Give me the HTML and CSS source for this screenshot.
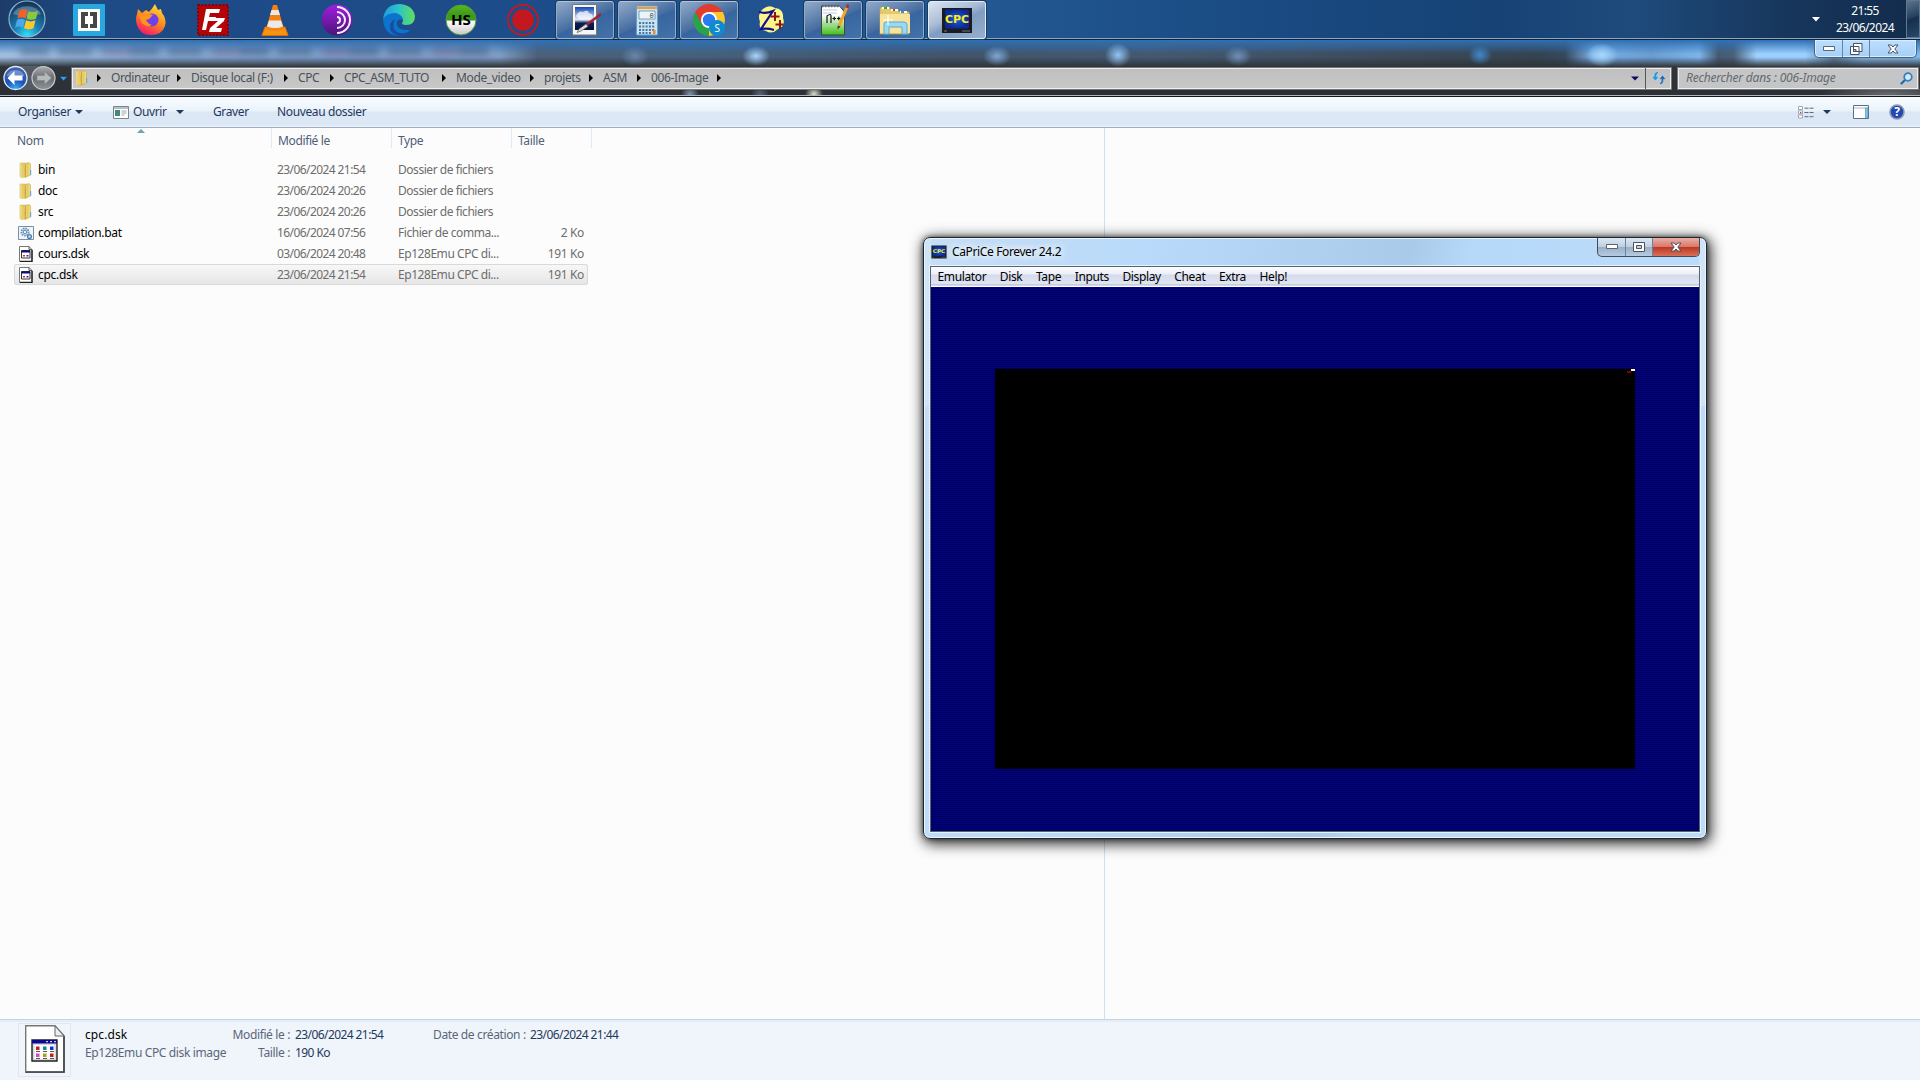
FILE: index.html
```html
<!DOCTYPE html>
<html lang="fr">
<head>
<meta charset="utf-8">
<title>006-Image</title>
<link rel="stylesheet" href="styles.css">
</head>
<body>
<svg class="defs" width="0" height="0" aria-hidden="true">
  <defs>
    <linearGradient id="gFold" x1="0" x2="1"><stop offset="0" stop-color="#f7e694"/><stop offset=".5" stop-color="#e3c862"/><stop offset="1" stop-color="#f3e08c"/></linearGradient>
    <radialGradient id="gOrb" cx=".5" cy=".95" r=".9"><stop offset="0" stop-color="#2fe0ff"/><stop offset=".4" stop-color="#1c7fb4"/><stop offset="1" stop-color="#14365a"/></radialGradient>
    <linearGradient id="gFox" x1=".8" y1="0" x2=".3" y2="1"><stop offset="0" stop-color="#ffe23d"/><stop offset=".5" stop-color="#ff8a1e"/><stop offset="1" stop-color="#f5156c"/></linearGradient>
    <linearGradient id="gTor" x1="0" x2="0" y1="0" y2="1"><stop offset="0" stop-color="#a01fe0"/><stop offset="1" stop-color="#4b1478"/></linearGradient>
    <linearGradient id="gEdge" x1="0" x2="1"><stop offset="0" stop-color="#1c9ddf"/><stop offset=".5" stop-color="#2dc3c8"/><stop offset="1" stop-color="#62e05a"/></linearGradient>
    <linearGradient id="gHs" x1="0" x2="0" y1="0" y2="1"><stop offset="0" stop-color="#58b81f"/><stop offset=".3" stop-color="#3f9c18"/><stop offset=".5" stop-color="#3f9c18"/><stop offset=".54" stop-color="#fff"/><stop offset="1" stop-color="#c8c8c8"/></linearGradient>
    <linearGradient id="gSky" x1="0" x2="0" y1="0" y2="1"><stop offset="0" stop-color="#1247b0"/><stop offset=".55" stop-color="#dfeaf8"/><stop offset=".7" stop-color="#0a1f55"/><stop offset="1" stop-color="#05113a"/></linearGradient>
    <linearGradient id="gNpp" x1="0" x2="0" y1="0" y2="1"><stop offset=".3" stop-color="#fff"/><stop offset="1" stop-color="#3fbf10"/></linearGradient>
    <radialGradient id="gNav" cx=".5" cy="1" r=".9"><stop offset="0" stop-color="#38b6ff"/><stop offset=".5" stop-color="#1c50b8"/><stop offset="1" stop-color="#3b63b0"/></radialGradient>
    <linearGradient id="gGrey" x1="0" x2="0" y1="0" y2="1"><stop offset="0" stop-color="#a9adb1"/><stop offset=".5" stop-color="#686d72"/><stop offset="1" stop-color="#90959a"/></linearGradient>
    <radialGradient id="gCpc"><stop offset="0" stop-color="#1a62d8"/><stop offset="1" stop-color="#0a2a9a"/></radialGradient>
    <symbol id="folder" viewBox="0 0 16 16"><path d="M2 1h4.500l1 1v13l-4.500.500-1-1z" fill="url(#gFold)" stroke="#d9bd58" stroke-width=".6"/><path d="M6 1.500l5-.8 1.500 1V13l-5.500 2.500z" fill="url(#gFold)" stroke="#caa63c" stroke-width=".6"/><path d="M7.500 2v13" stroke="#c39c34" stroke-width=".8"/><path d="M12 8h1.200v5H12z" fill="#58aee0"/></symbol>
    <symbol id="dsk" viewBox="0 0 16 16"><path d="M1.500.5h9.500l3 3v12h-12.500z" fill="#fff" stroke="#777"/><path d="M11 .5v3h3" fill="none" stroke="#555"/><path d="M14 4v11.500H2" fill="none" stroke="#222" stroke-width="1.400"/><path d="M3.500 4.500h8.500v7.500h-8.500z" fill="#fff" stroke="#333"/><path d="M3.500 4.500h8.500v2h-8.500z" fill="#0a0a80"/><path d="M5 9h2v1.500H5z" fill="#d22"/><path d="M8.500 9h2v1.500h-2z" fill="#22c"/></symbol>
    <symbol id="closex" viewBox="0 0 12 10"><path d="M1 1h3.200L6 3l1.800-2H11L7.800 5 11 9H7.800L6 7 4.200 9H1l3.200-4z" fill="#fff" stroke="#4a5262"/></symbol>
    <symbol id="cpc" viewBox="0 0 30 27"><path d="M0 1h30v25H0z" fill="#1c1c20"/><rect x="3" y="2.500" width="24" height="19" rx="2" fill="url(#gCpc)"/><path d="M2 24h3M20 24h8" stroke="#777"/><text x="15" y="16" text-anchor="middle" textLength="24" lengthAdjust="spacingAndGlyphs" class="cpc-text">CPC</text></symbol>
  </defs>
</svg>
<div class="desktop">
  <header class="taskbar">
    <svg class="orb" viewBox="0 0 38 38"><circle cx="19" cy="19" r="18" fill="url(#gOrb)" stroke="#8fb4cc" stroke-width="1.200"/><path d="M5 14a15 12 0 0 1 28 0q-14 5-28 0z" fill="#fff" opacity=".25"/><path d="M11.500 10.500q4-2.500 8 0l-2 8q-4-2-8 0z" fill="#f0622a"/><path d="M20.500 11.200q4 2 9.500-.5l-2 8q-5 2.200-9.500 0z" fill="#8cc83c"/><path d="M9 20q4-2.500 8 0l-2 8q-4-2.800-8 0z" fill="#4aa8ec"/><path d="M18 20.300q4.500 2.200 9.500 0l-2 8q-4.500 2.200-9.500 0z" fill="#fcc92c"/></svg>
    <nav class="tasks">
      <div class="task"><svg viewBox="0 0 32 32"><rect width="32" height="32" rx="1" fill="#29a8e0"/><rect x="5" y="5" width="22" height="22" fill="#fff"/><path d="M8 8h7v4h-3v8h3v4H8zM17 8h7v16h-7v-4h3v-8h-3z" fill="#474747"/></svg></div>
      <div class="task"><svg viewBox="0 0 32 32"><path d="M3 5l4 4 4-3 3 2q3-3 6-8l3 6 3-1 1 4q5 6 3 13-3 9-14 9T2 21Q0 15 2 10z" fill="url(#gFox)"/><circle cx="17" cy="16" r="6.500" fill="#7040e8"/><path d="M3 10l8 2 3-2 4 1-4 4-3 1q2 4 6 5-6 3-10-2z" fill="#ff9320"/></svg></div>
      <div class="task"><svg viewBox="0 0 32 32"><rect x="1" y="1" width="30" height="30" fill="#b50408" stroke="#8a0000" stroke-width="2" stroke-dasharray="2 1.500"/><path d="M9 5h14l-1 4h-9l-1 4h7l-1 4h-7l-2 9H5zM16 14h12l-1 3-8 7h6l-1 4H12l1-4 8-7h-6z" fill="#fff"/></svg></div>
      <div class="task"><svg viewBox="0 0 32 32"><path d="M6 23h20l3 8v.5H3V31z" fill="#f79413" stroke="#d86e00"/><path d="M14 1h4l7 24q-9 4-18 0z" fill="#f58210"/><path d="M12.500 6h7l1.500 5h-10zM10 16.500h12l2 6q-8 3-16 0z" fill="#e9e9e9"/></svg></div>
      <div class="task"><svg viewBox="0 0 32 32"><circle cx="16" cy="16" r="15.500" fill="url(#gTor)"/><path d="M16 3a13 13 0 0 1 0 26M16 8a8 8 0 0 1 0 16M16 13a3 3 0 0 1 0 6" fill="none" stroke="#f2eaff" stroke-width="2"/></svg></div>
      <div class="task"><svg viewBox="0 0 32 32"><path d="M0 15Q2 0 17 0q13 1 15 12 0 9-9 9-6 0-3-4 0-6-7-7-8 0-13 5z" fill="url(#gEdge)"/><path d="M0 15q5-7 13-6 6 2 7 7-3-2-6 1-2 10 13 9-4 6-12 6Q1 31 0 15z" fill="#0c74cc"/><path d="M12 15q-4 9 2 13 6 3 13-1-5 5-12 5-9-3-8-11 1-4 5-6z" fill="#1a4c9c"/></svg></div>
      <div class="task"><svg viewBox="0 0 32 32"><circle cx="16" cy="16" r="15" fill="url(#gHs)" stroke="#5a9a3c"/><text x="16" y="21" text-anchor="middle" textLength="20" lengthAdjust="spacingAndGlyphs" class="hs">HS</text></svg></div>
      <div class="task"><svg viewBox="0 0 32 32"><circle cx="16" cy="16" r="15" fill="none" stroke="#c41820" stroke-width="1.800"/><circle cx="16" cy="16" r="10.800" fill="#c41820"/></svg></div>
      <div class="task open"><svg viewBox="0 0 32 32"><path d="M3.500.5h24v30.500h-24z" fill="#f6f6f6" stroke="#777"/><path d="M6 3h19v23H6z" fill="url(#gSky)"/><path d="M7 12q3-6 7-4 5-3 6 1 4 1 4 4-3 3-8 2-5 2-9-3z" fill="#fff" opacity=".7"/><path d="M32 10L16 22" stroke="#a8202c" stroke-width="2.400"/><path d="M17 20l2 2.500-7 4.500-4 1.500 2-3.500z" fill="#ddd" stroke="#555" stroke-width=".7"/></svg></div>
      <div class="task open"><svg viewBox="0 0 32 32"><rect x="5.500" y="2" width="21" height="29" rx="1" fill="#c9e3f4" stroke="#6d9cc4"/><path d="M6 3h20v2H6z" fill="#f59c28"/><path d="M8 7h16v8H8z" fill="#eaf5fb" stroke="#6a8ba6" stroke-width=".8"/><path d="M8 19h16M8 22.500h16M8 26h16M8 29h12" stroke="#47779f" stroke-width="1.800" stroke-dasharray="2 1.300"/><path d="M22 26h2.500v4H22z" fill="#f08a1c"/><text x="18.500" y="13.500" class="digit">0</text></svg></div>
      <div class="task open"><svg viewBox="0 0 32 32"><path d="M16 16L2.200 8A16 16 0 0 0 16 32z" fill="#2aa24c"/><path d="M16 16L16 32A16 16 0 0 0 29.800 8H16z" fill="#fcc62d"/><path d="M2.200 8A16 16 0 0 1 29.800 8H16L9 20z" fill="#e33b2e"/><circle cx="16" cy="16" r="8" fill="#fff"/><circle cx="16" cy="16" r="6.200" fill="#2a7bf0"/><circle cx="24" cy="24" r="8" fill="#0b8bd0"/><text x="24" y="27.500" text-anchor="middle" class="badge-s">S</text></svg></div>
      <div class="task"><svg viewBox="0 0 32 32"><path d="M8 5q6-5 12-1 9 1 8 10 3 8-5 11-6 6-12 2-8-2-6-9-3-8 3-13z" fill="#fdf48a"/><path d="M4 8q7 2 14-1Q12 16 6 25q7-1 13 1" fill="none" stroke="#12128c" stroke-width="2.200"/><path d="M20 8v9M15.500 12.500h9M25 16v9M20.500 20.500h8" stroke="#8c1616" stroke-width="2"/></svg></div>
      <div class="task open"><svg viewBox="0 0 32 32"><path d="M4.500 2h18l5 6v23h-23z" fill="url(#gNpp)" stroke="#444"/><path d="M5 2h17" stroke="#666" stroke-width="2.500" stroke-dasharray="1.500 1.500"/><path d="M6 6h14M6 9h14M6 20h18" stroke="#9cb8d8" stroke-width=".7"/><path d="M10 19v-7q4-3 4 0v7M15.500 14.500h3.500M17.300 12.700v3.600M20 14.500h3.500M21.800 12.700v3.600" fill="none" stroke="#111" stroke-width="1.200"/><path d="M30 3L22 22" stroke="#f0a628" stroke-width="3"/><path d="M31.300.5L30 4" stroke="#a5343c" stroke-width="3"/><path d="M20.700 21.500l-.2 4 3-3z" fill="#333"/></svg></div>
      <div class="task open"><svg viewBox="0 0 32 32"><path d="M1 5q0-2 2-2h7l2 3h7l1 2h10v22H1z" fill="#e8c96a" stroke="#c9a345" stroke-width=".7"/><path d="M3 3h7v2H3zM12 5h7v2h-7zM21 7h7v2h-7z" fill="#fff"/><path d="M5 3h3v2H5z" fill="#1eb04c"/><path d="M14 5h2v2h-2z" fill="#d8332c"/><path d="M22 7h3v2h-3z" fill="#2994e0"/><path d="M1 10h30v19H1z" fill="#f7e39a"/><path d="M5 20q0-2 2-2h18q3 0 3 3v9h-5v-7H10v7H5z" fill="#9bd8f2" stroke="#5aaad2"/><path d="M9 11v10M4 16h10" stroke="#fff" stroke-width="1.200"/></svg></div>
      <div class="task open active"><svg class="cpc-big" viewBox="0 0 30 27"><use href="#cpc"/></svg></div>
    </nav>
    <div class="tray"><svg class="tray-arrow" viewBox="0 0 8 5"><path d="M0 0h8L4 4.500z" fill="#fff"/></svg>
      <div class="clock"><span>21:55</span><span>23/06/2024</span></div>
      <div class="peek"></div>
    </div>
  </header>

  <section class="explorer">
    <div class="glass">
      <div class="caption"><i class="ghost"></i>
        <div class="caption-buttons">
          <b><svg width="12" height="6" viewBox="0 0 12 6"><path d="M.5.5h11v4H.5z" fill="#fff" stroke="#5b6878"/></svg></b>
          <b><svg width="13" height="12" viewBox="0 0 13 12"><path d="M3.500.5h8.500v8H3.500zM.5 3.500h8.500v8H.5z" fill="#fff" stroke="#4a5262"/><path d="M3.500 6.500h2.500v2H3.500z" fill="#9cc4e8" stroke="#4a5262"/></svg></b>
          <b><svg width="12" height="10"><use href="#closex"/></svg></b>
        </div>
      </div>
      <div class="address-row">
        <svg class="nav" viewBox="0 0 58 26"><path d="M15 1H43V25H15z" fill="#9aa6b4" opacity=".35"/><circle cx="15.500" cy="13" r="11.500" fill="url(#gNav)" stroke="#e0ebf5" stroke-width="1.300"/><path d="M6.500 11a9.500 9 0 0 1 18 0z" fill="#fff" opacity=".3"/><path d="M14.500 6l-7 7 7 7v-4.500h8v-5h-8z" fill="#fff"/><circle cx="43.500" cy="13" r="11.500" fill="url(#gGrey)" stroke="#c8ccd0" stroke-width="1.200"/><path d="M44.500 6.500l7 6.500-7 6.500v-4h-7.500v-5h7.500z" fill="#b7babd" stroke="#888" stroke-width=".8"/></svg><svg class="recent" viewBox="0 0 9 6"><path d="M.5.5h8l-4 4.500z" fill="#3f9ae4" stroke="#12365c" stroke-width=".6"/></svg>
        <div class="address">
          <svg class="addr-folder" width="16" height="16"><use href="#folder"/></svg>
          <i class="tri first"></i>
          <div class="crumbs"><span>Ordinateur<i class="tri"></i></span><span>Disque local (F:)<i class="tri"></i></span><span>CPC<i class="tri"></i></span><span>CPC_ASM_TUTO<i class="tri"></i></span><span>Mode_video<i class="tri"></i></span><span>projets<i class="tri"></i></span><span>ASM<i class="tri"></i></span><span>006-Image<i class="tri"></i></span></div>
          <svg class="drop" width="8" height="5" viewBox="0 0 8 5"><path d="M0 .5h8L4 4.500z" fill="#0b0b5c"/></svg>
          <div class="refresh"><svg width="16" height="14" viewBox="0 0 16 14"><path d="M6.500.5Q2.500 1.500 3 5.500H.5L4.500 10 8 5.500H5.500Q5.500 3 8 1z" fill="#2a96dc" stroke="#e6f0f8" stroke-width=".4"/><path d="M9.500 13.500Q13 12.500 12.500 8.500H15L11.500 4 8 8.500h2.500Q10.500 11 8.500 12.500z" fill="#2567b4" stroke="#e6f0f8" stroke-width=".4"/></svg></div>
        </div>
        <div class="search"><span>Rechercher dans : 006-Image</span><svg width="13" height="13" viewBox="0 0 13 13"><path d="M5 8L1.500 11.500" stroke="#2266ac" stroke-width="2.200" stroke-linecap="round"/><circle cx="8" cy="5" r="3.800" fill="#d5e8f5" stroke="#2f80c8" stroke-width="1.700"/></svg></div>
      </div>
    </div>
    <div class="toolbar">
      <span class="t-org">Organiser</span><i class="down"></i>
      <svg class="open-ico" width="16" height="13" viewBox="0 0 16 13"><path d="M.5.5h15v12H.5z" fill="#fff" stroke="#7c8490"/><path d="M1 1h14v2H1z" fill="#b8bec8"/><path d="M2 4h5v6H2z" fill="#3f8a7a"/><path d="M8.500 5h5M8.500 7h5M8.500 9h3" stroke="#9aa"/></svg>
      <span class="t-open">Ouvrir</span><i class="down d2"></i>
      <span class="t-burn">Graver</span>
      <span class="t-new">Nouveau dossier</span>
      <div class="view-tools">
        <svg class="v1" width="16" height="13" viewBox="0 0 16 13"><path d="M.5.500h4v3h-4zM.5 4.800h4v3h-4zM.5 9h4v3h-4z" fill="#fff" stroke="#8a96a6" stroke-width=".8"/><path d="M2 6h1.300v1.200H2z" fill="#c33"/><path d="M6.500 2.200h9M6.500 6.500h9M6.500 10.700h9" stroke="#5a6b80" stroke-dasharray="4 1"/></svg>
        <i class="down"></i>
        <svg class="v2" width="16" height="14" viewBox="0 0 16 14"><path d="M.5.5h15v13H.5z" fill="#fff" stroke="#5a6e86"/><path d="M1 3h14" stroke="#a9b7c8"/><path d="M12.500 3h2.500v10h-2.500z" fill="#7cc4e8" stroke="#5a8aa8" stroke-width=".6"/></svg>
        <svg class="v3" width="16" height="16" viewBox="0 0 16 16"><circle cx="8" cy="8" r="7" fill="#2148b4" stroke="#8f9cae" stroke-width="1.600"/><text x="8" y="12.300" text-anchor="middle" class="help">?</text></svg>
      </div>
    </div>
    <div class="content">
      <div class="list">
        <div class="row head"><span>Nom<i class="sort"></i></span><span>Modifié le</span><span>Type</span><span>Taille</span></div>
        <div class="row"><span><svg><use href="#folder"/></svg>bin</span><span>23/06/2024 21:54</span><span>Dossier de fichiers</span><span></span></div>
        <div class="row"><span><svg><use href="#folder"/></svg>doc</span><span>23/06/2024 20:26</span><span>Dossier de fichiers</span><span></span></div>
        <div class="row"><span><svg><use href="#folder"/></svg>src</span><span>23/06/2024 20:26</span><span>Dossier de fichiers</span><span></span></div>
        <div class="row"><span><svg viewBox="0 0 16 16"><path d="M.5 1.500h15v13H.5z" fill="#eef5fb" stroke="#7a8ea6"/><circle cx="7" cy="7" r="3.600" fill="none" stroke="#6d94b8" stroke-width="2" stroke-dasharray="1.600 .8"/><circle cx="7" cy="7" r="1.800" fill="none" stroke="#5b82a8"/><circle cx="11.500" cy="11.500" r="1.900" fill="#cfe2f3" stroke="#4c79a8" stroke-width="1.300"/></svg>compilation.bat</span><span>16/06/2024 07:56</span><span>Fichier de comma...</span><span>2 Ko</span></div>
        <div class="row"><span><svg><use href="#dsk"/></svg>cours.dsk</span><span>03/06/2024 20:48</span><span>Ep128Emu CPC di...</span><span>191 Ko</span></div>
        <div class="row selected"><span><svg><use href="#dsk"/></svg>cpc.dsk</span><span>23/06/2024 21:54</span><span>Ep128Emu CPC di...</span><span>191 Ko</span></div>
      </div>
      <div class="preview"></div>
    </div>
    <footer class="details">
      <div class="thumb"><svg width="40" height="48" viewBox="0 0 40 48"><path d="M.7.7H30l9 10v36.500H.7z" fill="#fff" stroke="#777" stroke-width="1.400"/><path d="M39 11v36H1" fill="none" stroke="#444" stroke-width="1.600"/><path d="M30 1v10h9z" fill="#eee" stroke="#666"/><path d="M7 15h25v21H7z" fill="#d8d8d8" stroke="#222" stroke-width="1.400"/><path d="M7 15h25v3.500H7z" fill="#0a0a90"/><path d="M21 16.700h2M25 16.700h2M29 16.700h2" stroke="#fff"/><path d="M9.500 20h20v14h-20z" fill="#fff"/><path d="M11 21.500h3.500v3.500H11z" fill="#c8142c"/><path d="M18 21.500h3.500v3.500H18z" fill="#0c8c8c"/><path d="M25 21.500h3.500v3.500H25z" fill="#1c28d0"/><path d="M11 28.500h3.500v3.500H11z" fill="#e23cc8"/><path d="M18 28.500h3.500v3.500H18z" fill="#a8a010"/><path d="M25 28.500h3.500v3.500H25z" fill="#c81c1c"/><path d="M11 26.500h18M11 33.500h18" stroke="#555" stroke-dasharray="4 3"/></svg></div>
      <div class="file"><strong>cpc.dsk</strong><span>Ep128Emu CPC disk image</span></div>
      <dl class="meta m1"><dt>Modifié le :</dt><dd>23/06/2024 21:54</dd><dt>Taille :</dt><dd>190 Ko</dd></dl>
      <dl class="meta m2"><dt>Date de création :</dt><dd>23/06/2024 21:44</dd></dl>
    </footer>
  </section>

  <section class="emulator">
    <div class="emu-title"><svg width="16" height="14" viewBox="0 0 30 27"><use href="#cpc"/></svg><span>CaPriCe Forever 24.2</span>
      <div class="emu-buttons"><b><svg width="12" height="6" viewBox="0 0 12 6"><path d="M.5.5h11v4H.5z" fill="#fff" stroke="#5b6470"/></svg></b><b><svg width="12" height="10" viewBox="0 0 12 10"><path d="M.5.5h11v9H.5z" fill="#fff" stroke="#4a5262"/><path d="M3.500 3.500h5v3h-5z" fill="#c4d0dc" stroke="#4a5262"/></svg></b><b><svg width="12" height="10"><use href="#closex"/></svg></b></div>
    </div>
    <div class="client">
      <div class="menu"><span>Emulator</span><span>Disk</span><span>Tape</span><span>Inputs</span><span>Display</span><span>Cheat</span><span>Extra</span><span>Help!</span></div>
      <div class="screen"><div class="paper"><i class="red"></i><i class="white"></i></div></div>
    </div>
  </section>
</div>
</body>
</html>
```
FILE: styles.css
```css
* { box-sizing: border-box; }
body { margin: 0; font: 12px/16px "Noto Sans", "Open Sans", sans-serif; letter-spacing: -0.37px; color: #000; overflow: hidden; }
i { font-style: normal; }
.defs { position: absolute; }
.desktop { width: 1920px; height: 1080px; display: flex; flex-direction: column; position: relative; background: #fcfcfc; white-space: nowrap; }

/* Taskbar */
.taskbar { height: 40px; flex: none; display: flex; background: linear-gradient(90deg, #1d3c69 0, #1e4a85 5%, #1d4d8b 30%, #235993 50%, #1a4b83 65%, #164275 78%, #1e4b7c 85%, #17365c 93%, #122c4b 100%); border-bottom: 1px solid #10233b; box-shadow: inset 0 -1px #8aa6c2; }
.orb { width: 38px; height: 38px; margin-left: 8px; }
.tasks { display: flex; margin-left: 12px; }
.task { width: 62px; height: 39px; display: flex; align-items: center; justify-content: center; padding-top: 1px; }
.task svg { width: 32px; height: 32px; }
.task svg.cpc-big { width: 30px; height: 27px; }
.task.open { width: 58px; margin: 1px 2px 0; height: 38px; padding-top: 0; border: 1px solid; border-color: #b4c4d8 #90abc8 #9db4cc; border-radius: 3px; background: linear-gradient(155deg, #93a9c8 0, #6587b2 30%, #446c9f 52%, #3765a0 54%, #4473aa 100%); box-shadow: 0 0 0 1px #163b66; }
.task.active { background: linear-gradient(155deg, #dbe3ee 0, #aabdd6 40%, #7f9dc2 55%, #96b0ce 100%); border-color: #e3ebf3; }
.cpc-text { font: bold 10px "DejaVu Sans", sans-serif; fill: #ffec1a; letter-spacing: 0; }
.hs { font: bold 14px "Noto Sans", sans-serif; letter-spacing: 0; }
.digit { font: 7px "Liberation Mono", monospace; fill: #333; }
.badge-s { font: 10px "Noto Sans", sans-serif; fill: #fff; }
.help { font: bold 12px "Noto Sans", sans-serif; fill: #fff; }
.tray { margin-left: auto; display: flex; }
.tray-arrow { width: 8px; height: 5px; margin: 17px 12px 0 0; }
.clock { width: 66px; color: #fff; text-align: center; display: flex; flex-direction: column; line-height: 17px; padding-top: 2px; letter-spacing: -0.6px; }
.peek { width: 14px; height: 38px; margin-left: 8px; border: 1px solid #60778f; background: linear-gradient(160deg, #5c738c 0, #24405f 45%, #152f4c 50%, #28486a 100%); }

/* Explorer */
.explorer { flex: 1; display: flex; flex-direction: column; min-height: 0; }
.glass { height: 57px; flex: none; border-bottom: 1px solid #111820; box-shadow: inset 0 -1px #b5b5bb; background:
  radial-gradient(ellipse 14px 10px at 756px 16px, #a8d4ff, transparent),
  radial-gradient(ellipse 14px 10px at 635px 16px, #6885a8, transparent),
  radial-gradient(ellipse 14px 10px at 997px 16px, #7ea6d4, transparent),
  radial-gradient(ellipse 13px 12px at 1118px 15px, #94c4f4, transparent),
  radial-gradient(ellipse 14px 10px at 1238px 16px, #6f8fb8, transparent),
  radial-gradient(ellipse 12px 10px at 1480px 15px, #3f8ad0, transparent),
  radial-gradient(ellipse 16px 12px at 1602px 15px, #a8d8ff, transparent),
  radial-gradient(ellipse 9px 8px at 814px 54px, #d8dfc4, transparent),
  radial-gradient(ellipse 9px 8px at 690px 54px, #7d93ae, transparent),
  radial-gradient(ellipse 9px 8px at 760px 54px, #55647a, transparent),
  radial-gradient(ellipse 70px 10px at 1890px 54px, #666a6e, transparent),
  linear-gradient(180deg, transparent 17px, #2f3439 27px, #2c3137 100%),
  linear-gradient(180deg, #2e70b4 0, #2e70b400 14px),
  linear-gradient(90deg, #9fbede 0, #84a6d0 8%, #7899c6 18%, #7d9cc4 26%, #4c6078 28%, #46607c 36%, #41546a 50%, #435970 60%, #3c4a5a 73%, #344350 80%, #35485c 81.500%, #78b0e8 83%, #6b9cd0 86%, #7cb4ea 88.500%, #455a70 89.500%, #4b6078 90.300%, #9cd0ff 91.500%, #9cd0ff 94%, #5c7ca0 95.500%, #86b8ea 97%, #82b8ea 100%); }
.caption { height: 26px; display: flex; justify-content: flex-end; }
.ghost { width: 476px; height: 9px; margin: 7px auto 0 20px; filter: blur(3px); background: repeating-linear-gradient(90deg, #3a4f7366 0 27px, #88a5cc33 30px 36px, #44597a66 40px 70px, #88a5cc22 73px 80px, #6d587e55 84px 110px); }
.caption-buttons { display: flex; width: 103px; height: 18px; margin-right: 3px; border: 1px solid #47647f; border-top: 0; border-radius: 0 0 5px 5px; background: linear-gradient(#bcdfff, #a6cff5); box-shadow: inset 0 0 0 1px #d8edff; }
.caption-buttons b, .emu-buttons b { width: 28px; display: flex; align-items: center; justify-content: center; border-right: 1px solid #6484a0; }
.caption-buttons b:nth-child(2), .emu-buttons b:nth-child(2) { width: 27px; }
.caption-buttons b:last-child, .emu-buttons b:last-child { flex: 1; border: 0; }
.address-row { display: flex; height: 24px; align-items: center; }
.nav { width: 58px; height: 26px; flex: none; overflow: hidden; }
.recent { width: 9px; height: 6px; margin: 1px 3px 0 1px; }
.address { display: flex; align-items: center; width: 1601px; height: 23px; border: 1px solid #777; box-shadow: inset 0 0 0 1px #eee; background: linear-gradient(#bfbfbf, #c8c8c8); color: #48525a; }
.addr-folder { margin-left: 2px; }
.tri { width: 0; height: 0; border: 4px solid transparent; border-left: 4px solid #000; border-right: 0; }
.tri.first { margin-left: 7px; }
.crumbs { display: grid; grid-template-columns: 80px 107px 46px 112px 88px 59px 48px 70px; margin-left: 10px; }
.crumbs span { display: flex; align-items: center; justify-content: space-between; padding-right: 10px; }
.crumbs span:last-child { padding-right: 0; }
.drop { margin-left: auto; margin-right: 6px; }
.refresh { width: 26px; height: 21px; display: flex; align-items: center; justify-content: center; border-left: 1px solid #555; }
.search { margin-left: 5px; width: 242px; height: 23px; display: flex; align-items: center; justify-content: space-between; padding: 0 5px 0 8px; border: 1px solid #777; box-shadow: inset 0 0 0 1px #eee; background: #c4c5c6; color: #656a6e; font-style: italic; letter-spacing: -0.2px; }
.toolbar { height: 31px; flex: none; display: flex; align-items: center; color: #1e395b; background: linear-gradient(#fafdff 0, #e9f2fb 14px, #dce7f5 15px, #dde8f6 28px, #e8f0f9 29px); border-bottom: 1px solid #a0afc3; padding: 0 15px 0 18px; }
.t-org { width: 57px; }
.down { width: 0; height: 0; border: 4px solid transparent; border-top: 4px solid #1e395b; border-bottom: 0; }
.open-ico { margin: 0 4px 0 30px; }
.t-open { width: 43px; }
.t-burn { margin-left: 29px; width: 64px; }
.view-tools { display: flex; align-items: center; margin-left: auto; }
.v1 { margin-right: 9px; }
.v2 { margin: 0 20px 0 22px; }
.content { flex: 1; display: flex; }
.list { width: 1105px; border-right: 1px solid #cfe1f1; }
.row { display: grid; grid-template-columns: 263px 121px 117px 69px; width: 574px; height: 21px; margin-left: 14px; align-items: center; color: #6d6d6d; }
.row span:nth-child(2) { letter-spacing: -0.58px; }
.row span:nth-child(3) { letter-spacing: -0.45px; }
.row span:first-child { display: flex; align-items: center; color: #000; padding-left: 4px; letter-spacing: -0.3px; }
.row svg { width: 16px; height: 16px; margin-right: 4px; }
.row span:nth-child(4) { text-align: right; }
.row.head { position: relative; width: 578px; height: 26px; margin-bottom: 5px; grid-template-columns: 258px 120px 120px 80px; align-items: start; line-height: 26px; }
.row.head span { color: #4c607a; padding-left: 6px; border-right: 1px solid #dfeaf6; height: 20px; letter-spacing: -0.37px; }
.row.head span:first-child { display: block; padding-left: 3px; }
.row.head span:nth-child(4) { text-align: left; }
.sort { position: absolute; left: 123px; top: 1px; border: 4px solid transparent; border-bottom: 4px solid #6ba0b8; border-top: 0; }
.row.selected { box-shadow: inset 0 0 0 1px #d9d9d9; border-radius: 3px; background: linear-gradient(#f8f8f8, #e5e5e5); }
.details { height: 61px; flex: none; display: flex; border-top: 1px solid #c6d4e3; box-shadow: inset 0 2px #e4ecf5; background: #f0f4fb; padding: 3px 0 0 18px; color: #5a6779; }
.thumb { width: 53px; height: 54px; border: 1px solid #e2e6ee; display: flex; align-items: center; justify-content: center; padding-bottom: 2px; }
.file { display: flex; flex-direction: column; width: 147px; margin-left: 14px; padding-top: 3px; line-height: 18px; }
.file strong { font-weight: 400; color: #000; letter-spacing: 0.1px; }
.meta { margin: 3px 0 0; display: grid; grid-template-columns: 58px 88px; column-gap: 5px; grid-auto-rows: 18px; line-height: 18px; }
.meta dt { text-align: right; }
.meta dd { margin: 0; color: #1e395b; letter-spacing: -0.58px; }
.m2 { margin-left: 50px; grid-template-columns: 92px 90px; }

/* Emulator window floating over the explorer */
.emulator { position: absolute; left: 923px; top: 237px; width: 784px; height: 602px; border: 1px solid #1e252d; border-radius: 7px; padding: 0 7px 7px; background: linear-gradient(#e8f2fb, #e8f2fb) 0 0 / 0 0 no-repeat, linear-gradient(90deg, #d0e4f7 0 7px, transparent 7px 775px, #d0e4f7 775px) 0 0 / 100% 168px no-repeat, linear-gradient(100deg, #c5def5 0, #b9dafa 25%, #a9cae9 55%, #b7d9f9 62%, #bddcfa 100%); box-shadow: inset 0 0 0 1px #eaf5ff, 2px 3px 14px 2px #000c, 0 0 5px #0008; }
.emu-title { height: 28px; display: flex; align-items: center; }
.emu-title > span { margin-left: 5px; text-shadow: 0 0 8px #fff, 0 0 8px #fff, 0 0 10px #fff; }
.emu-buttons { display: flex; align-self: flex-start; width: 103px; height: 19px; margin-left: auto; margin-right: -1px; border: 1px solid #3e4c5c; border-top: 0; border-radius: 0 0 5px 5px; overflow: hidden; background: linear-gradient(#dae6f2 0, #c0d0e2 48%, #98aec6 50%, #b6cbe0 100%); }
.emu-buttons b:last-child { background: linear-gradient(#eab0a6 0, #d9786a 48%, #bd3420 50%, #d6705a 100%); }
.client { height: 566px; width: 770px; margin-left: -1px; border: 1px solid #566472; box-shadow: 0 0 0 1px #e6f2fd; display: flex; flex-direction: column; }
.menu { height: 20px; flex: none; display: flex; gap: 13.6px; padding-left: 6.5px; line-height: 20px; background: linear-gradient(#fdfdfe 0, #eceff7 7px, #d5dbec 8px, #e0e5f2 17px, #aeb4c4 18px, #fff 19px); }
.screen { flex: 1; background: repeating-linear-gradient(#00008a 0 1px, #000052 1px 2px); padding: 82px 0 0 64px; }
.paper { width: 640px; height: 400px; background: #000; display: flex; justify-content: flex-end; }
.paper i { width: 4px; height: 2px; }
.red { background: #800000; margin-top: 2px; }
.white { background: #fff; }
```
